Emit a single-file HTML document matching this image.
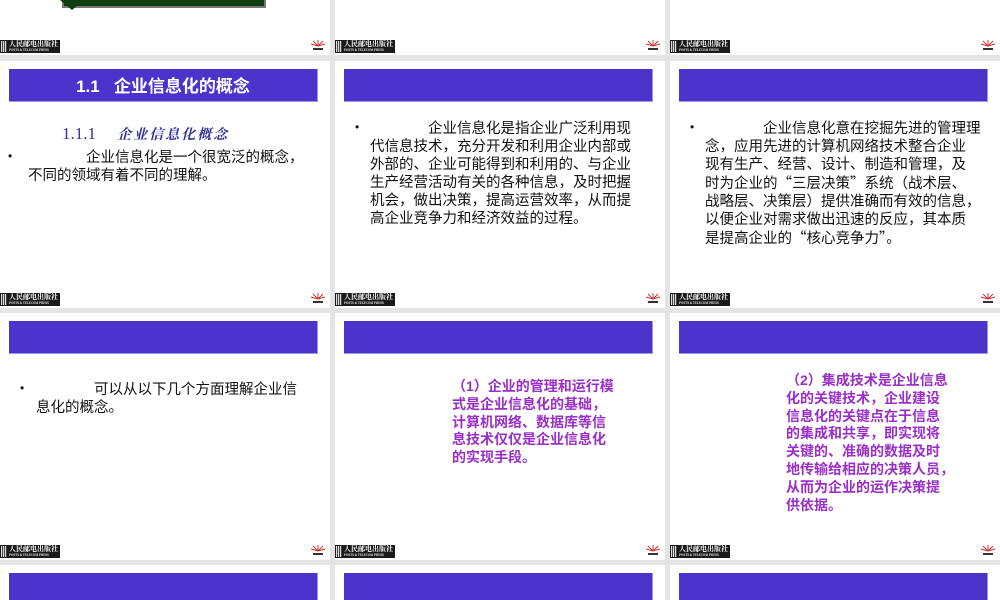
<!DOCTYPE html>
<html><head><meta charset="utf-8"><style>
*{margin:0;padding:0;box-sizing:border-box}
html{width:1000px;height:600px;overflow:hidden}
body{width:1000px;height:600px;overflow:hidden;background:#e4e4e4;position:relative;font-family:"Liberation Sans","Noto Sans CJK SC",sans-serif}
.s{position:absolute;width:330px;height:247px;background:#fff;overflow:hidden}
.bar{position:absolute;left:9px;top:8px;width:309px;height:33px;background:#4b33cc;border-right:1px solid #9a9ae0;border-bottom:1px solid #9a9ae0}
.lg{position:absolute;left:0;bottom:2px;width:60px;height:13px;background:#1a1a1a;color:#fff;font:bold 7px "Noto Serif CJK SC",serif;line-height:8px;padding-left:9px;white-space:nowrap}
.lg small{display:block;font-size:3px;line-height:4px}
.lg:before{content:"";position:absolute;left:1px;top:1px;width:6px;height:11px;background:repeating-linear-gradient(90deg,#ddd 0 1px,#444 1px 2px)}
.rl{position:absolute;right:3px;bottom:3px;width:18px;height:14px}
.t{position:absolute;font-size:14.5px;line-height:18px;color:#111;white-space:nowrap}
.q{font-family:"Noto Sans CJK SC",sans-serif}
.b{position:absolute;font-size:12px;color:#111}
.p{position:absolute;font-size:14px;line-height:17.8px;color:#9a2fc8;font-weight:bold;white-space:nowrap}
</style></head><body>
<div class="s" style="left:0;top:-192px">
<div style="position:absolute;left:62px;top:186px;width:204px;height:14px;background:#0f3d0f;border:2px solid #777;border-top:none"></div>
<div style="position:absolute;left:60px;top:192px;width:0;height:0;border-left:12px solid transparent;border-right:12px solid transparent;border-top:10px solid #0f3d0f"></div>
<div class="lg">人民邮电出版社<small>POSTS &amp; TELECOM PRESS</small></div><svg class="rl" viewBox="0 0 18 14"><g stroke="#c33" stroke-width="1"><path d="M9 8V2M9 8L4 3M9 8L14 3M9 8L2 6M9 8L16 6"/></g><rect x="4" y="10" width="10" height="2" fill="#333"/></svg></div>
<div class="s" style="left:335px;top:-192px"><div class="lg">人民邮电出版社<small>POSTS &amp; TELECOM PRESS</small></div><svg class="rl" viewBox="0 0 18 14"><g stroke="#c33"><path d="M9 8V2M9 8L4 3M9 8L14 3M9 8L2 6M9 8L16 6"/></g><rect x="4" y="10" width="10" height="2" fill="#333"/></svg></div>
<div class="s" style="left:670px;top:-192px"><div class="lg">人民邮电出版社<small>POSTS &amp; TELECOM PRESS</small></div><svg class="rl" viewBox="0 0 18 14"><g stroke="#c33"><path d="M9 8V2M9 8L4 3M9 8L14 3M9 8L2 6M9 8L16 6"/></g><rect x="4" y="10" width="10" height="2" fill="#333"/></svg></div>

<div class="s" style="left:0;top:61px"><div class="bar"><div style="color:#fff;font-weight:bold;font-size:17px;text-align:center;line-height:36px">1.1&nbsp;&nbsp;&nbsp;企业信息化的概念</div></div>
<div style="position:absolute;left:62px;top:63px;font-family:'Liberation Serif','Noto Serif CJK SC',serif;font-size:17px;color:#333399;white-space:nowrap">1.1.1&nbsp;&nbsp;&nbsp;&nbsp;&nbsp;<b style="font-size:14px;font-style:italic;letter-spacing:2px">企业信息化概念</b></div>
<div class="b" style="left:8px;top:88px">•</div>
<div class="t" style="left:28px;top:88px">　　　　企业信息化是一个很宽泛的概念，<br>不同的领域有着不同的理解。</div>
<div class="lg">人民邮电出版社<small>POSTS &amp; TELECOM PRESS</small></div><svg class="rl" viewBox="0 0 18 14"><g stroke="#c33"><path d="M9 8V2M9 8L4 3M9 8L14 3M9 8L2 6M9 8L16 6"/></g><rect x="4" y="10" width="10" height="2" fill="#333"/></svg></div>
<div class="s" style="left:335px;top:61px"><div class="bar"></div>
<div class="b" style="left:20px;top:59px">•</div>
<div class="t" style="left:35px;top:59px">　　　　企业信息化是指企业广泛利用现<br>代信息技术，充分开发和利用企业内部或<br>外部的、企业可能得到和利用的、与企业<br>生产经营活动有关的各种信息，及时把握<br>机会，做出决策，提高运营效率，从而提<br>高企业竞争力和经济效益的过程。</div>
<div class="lg">人民邮电出版社<small>POSTS &amp; TELECOM PRESS</small></div><svg class="rl" viewBox="0 0 18 14"><g stroke="#c33"><path d="M9 8V2M9 8L4 3M9 8L14 3M9 8L2 6M9 8L16 6"/></g><rect x="4" y="10" width="10" height="2" fill="#333"/></svg></div>
<div class="s" style="left:670px;top:61px"><div class="bar"></div>
<div class="b" style="left:20px;top:59px">•</div>
<div class="t" style="left:35px;top:59px">　　　　企业信息化意在挖掘先进的管理理<br>念，应用先进的计算机网络技术整合企业<br>现有生产、经营、设计、制造和管理，及<br>时为企业的<span class="q">“</span>三层决策<span class="q">”</span>系统（战术层、<br>战略层、决策层）提供准确而有效的信息，<br>以便企业对需求做出迅速的反应，其本质<br>是提高企业的<span class="q">“</span>核心竞争力<span class="q">”</span>。</div>
<div class="lg">人民邮电出版社<small>POSTS &amp; TELECOM PRESS</small></div><svg class="rl" viewBox="0 0 18 14"><g stroke="#c33"><path d="M9 8V2M9 8L4 3M9 8L14 3M9 8L2 6M9 8L16 6"/></g><rect x="4" y="10" width="10" height="2" fill="#333"/></svg></div>

<div class="s" style="left:0;top:313px"><div class="bar"></div>
<div class="b" style="left:20px;top:68px">•</div>
<div class="t" style="left:36px;top:68px">　　　　可以从以下几个方面理解企业信<br>息化的概念。</div>
<div class="lg">人民邮电出版社<small>POSTS &amp; TELECOM PRESS</small></div><svg class="rl" viewBox="0 0 18 14"><g stroke="#c33"><path d="M9 8V2M9 8L4 3M9 8L14 3M9 8L2 6M9 8L16 6"/></g><rect x="4" y="10" width="10" height="2" fill="#333"/></svg></div>
<div class="s" style="left:335px;top:313px"><div class="bar"></div>
<div class="p" style="left:117px;top:65px">（1）企业的管理和运行模<br>式是企业信息化的基础，<br>计算机网络、数据库等信<br>息技术仅仅是企业信息化<br>的实现手段。</div>
<div class="lg">人民邮电出版社<small>POSTS &amp; TELECOM PRESS</small></div><svg class="rl" viewBox="0 0 18 14"><g stroke="#c33"><path d="M9 8V2M9 8L4 3M9 8L14 3M9 8L2 6M9 8L16 6"/></g><rect x="4" y="10" width="10" height="2" fill="#333"/></svg></div>
<div class="s" style="left:670px;top:313px"><div class="bar"></div>
<div class="p" style="left:116px;top:59px">（2）集成技术是企业信息<br>化的关键技术，企业建设<br>信息化的关键点在于信息<br>的集成和共享，即实现将<br>关键的、准确的数据及时<br>地传输给相应的决策人员，<br>从而为企业的运作决策提<br>供依据。</div>
<div class="lg">人民邮电出版社<small>POSTS &amp; TELECOM PRESS</small></div><svg class="rl" viewBox="0 0 18 14"><g stroke="#c33"><path d="M9 8V2M9 8L4 3M9 8L14 3M9 8L2 6M9 8L16 6"/></g><rect x="4" y="10" width="10" height="2" fill="#333"/></svg></div>

<div class="s" style="left:0;top:565px;height:35px"><div class="bar"></div></div>
<div class="s" style="left:335px;top:565px;height:35px"><div class="bar"></div></div>
<div class="s" style="left:670px;top:565px;height:35px"><div class="bar"></div></div>
</body></html>
